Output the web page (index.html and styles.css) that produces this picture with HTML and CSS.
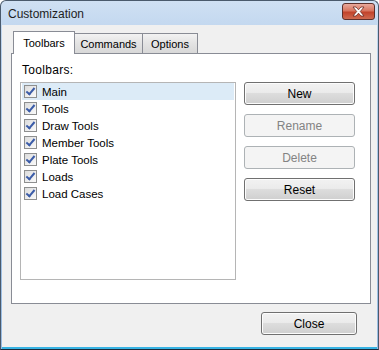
FILE: index.html
```html
<!DOCTYPE html>
<html lang="en">

<head>
    <meta charset="UTF-8">
    <meta name="viewport" content="width=device-width, initial-scale=1.0">
    <title>Customization</title>
    <link rel="stylesheet" href="styles.css">
</head>

<body>
    <div class="window">
        <div class="titlebar">
            <span class="title">Customization</span>
            <div class="close-x">
                <svg width="15" height="11" viewBox="0 0 15 11">
                    <path d="M2 1 H5 L7.5 3.8 L10 1 H13 L9.3 5.5 L13 10 H10 L7.5 7.2 L5 10 H2 L5.7 5.5 Z" fill="#fff" stroke="#6b2a22" stroke-width="0.8"/>
                </svg>
            </div>
        </div>

        <div class="client">
            <div class="tabs">
                <div class="tab active">Toolbars</div>
                <div class="tab">Commands</div>
                <div class="tab">Options</div>
            </div>

            <div class="panel">
                <div class="label">Toolbars:</div>
                <div class="panel-body">
                    <ul class="list">
                        <li class="selected"><span class="check"></span>Main</li>
                        <li><span class="check"></span>Tools</li>
                        <li><span class="check"></span>Draw Tools</li>
                        <li><span class="check"></span>Member Tools</li>
                        <li><span class="check"></span>Plate Tools</li>
                        <li><span class="check"></span>Loads</li>
                        <li><span class="check"></span>Load Cases</li>
                    </ul>

                    <div class="actions">
                        <button class="btn">New</button>
                        <button class="btn" disabled>Rename</button>
                        <button class="btn" disabled>Delete</button>
                        <button class="btn">Reset</button>
                    </div>
                </div>
            </div>

            <div class="footer">
                <button class="btn close">Close</button>
            </div>
        </div>
    </div>
</body>

</html>
```

FILE: styles.css
```css
body {
    margin: 0;
    padding: 0;
    font-family: "Liberation Sans", Arial, sans-serif;
    font-size: 11px;
    color: #000;
    background-color: #fff;
}

.window {
    width: 379px;
    height: 350px;
    box-sizing: border-box;
    border: 1px solid #4a5a6c;
    border-bottom-color: #1c2a3a;
    border-radius: 6px 6px 0 0;
    background: linear-gradient(#cfe0f3, #b3cdeb 60px, #98bce3);
    display: flex;
    flex-direction: column;
    overflow: hidden;
}

.titlebar {
    height: 24px;
    display: flex;
    align-items: center;
    justify-content: space-between;
    padding: 0 3px 0 7px;
}

.title {
    font-size: 12px;
    color: #1e1e1e;
    padding-top: 1px;
}

.close-x {
    width: 31px;
    height: 15px;
    margin-top: -3px;
    border: 1px solid #5d2f2b;
    border-radius: 3px;
    background: linear-gradient(#e9a99c, #d8755f 45%, #c2432b 55%, #cf6a50);
    display: flex;
    align-items: center;
    justify-content: center;
}

.client {
    flex: 1;
    margin: 0 1px 0 1px;
    border-bottom: 2px solid #37b3e3;
    background-color: #f0f0f0;
    padding: 6px 6px 0 9px;
    display: flex;
    flex-direction: column;
}

.tabs {
    display: flex;
    align-items: flex-end;
    height: 22px;
    padding-left: 2px;
    position: relative;
    z-index: 1;
}

.tab {
    height: 20px;
    box-sizing: border-box;
    padding: 4px 0 0;
    text-align: center;
    border: 1px solid #898c95;
    border-bottom: none;
    border-left: none;
    background: linear-gradient(#f2f2f2, #e3e3e3 50%, #d8d8d8);
    font-size: 11px;
}

.tab:nth-child(2) {
    width: 68px;
}

.tab:nth-child(3) {
    width: 55px;
}

.tab.active {
    width: 62px;
    height: 23px;
    margin-bottom: -1px;
    padding: 5px 0 0;
    border-left: 1px solid #898c95;
    background: #fff;
}

.panel {
    height: 251px;
    box-sizing: border-box;
    border: 1px solid #898c95;
    background-color: #fff;
    padding: 9px 8px 0 8px;
}

.label {
    font-size: 12px;
    letter-spacing: 0.3px;
    margin-left: 2px;
    height: 18px;
}

.panel-body {
    display: flex;
    gap: 8px;
    padding-top: 1px;
}

.list {
    list-style: none;
    margin: 0;
    padding: 0 1px;
    width: 216px;
    height: 198px;
    box-sizing: border-box;
    border: 1px solid #b5b5b5;
}

.list li {
    height: 17px;
    display: flex;
    align-items: center;
    font-size: 11.5px;
    padding-left: 2px;
}

.list li.selected {
    background-color: #dcebf7;
}

.check {
    width: 11px;
    height: 11px;
    margin-right: 5px;
    border: 1px solid #8e8f8f;
    background: linear-gradient(135deg, #dcdcdc, #fafafa);
    position: relative;
}

.check::after {
    content: "";
    position: absolute;
    left: 3px;
    top: 0;
    width: 3px;
    height: 7px;
    border: solid #3b5ca8;
    border-width: 0 2px 2px 0;
    transform: rotate(40deg);
}

.actions {
    display: flex;
    flex-direction: column;
    gap: 9px;
}

.btn {
    width: 111px;
    height: 23px;
    font-family: "Liberation Sans", Arial, sans-serif;
    font-size: 12px;
    color: #000;
    border: 1px solid #707070;
    border-radius: 3px;
    background: linear-gradient(#f2f2f2, #ebebeb 45%, #dddddd 50%, #cfcfcf);
    box-shadow: inset 0 0 0 1px #fcfcfc;
    padding: 0;
}

.btn:disabled {
    color: #838383;
    border-color: #adb2b5;
    background: #f4f4f4;
    box-shadow: none;
}

.footer {
    display: flex;
    justify-content: flex-end;
    padding: 8px 14px 0 0;
}

.btn.close {
    width: 96px;
}
```
